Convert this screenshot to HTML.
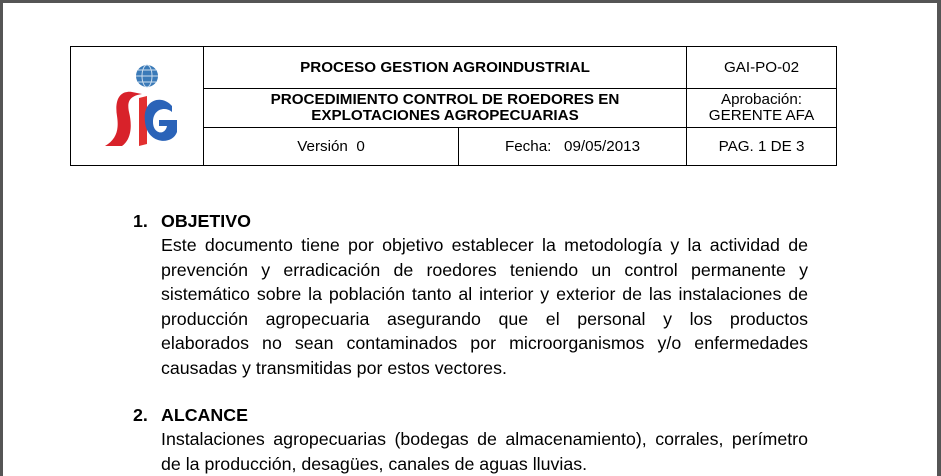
<!DOCTYPE html>
<html><head><style>
body{margin:0;width:941px;height:476px;overflow:hidden;background:#fff;font-family:"Liberation Sans",Arial,sans-serif;position:relative}
.frame{position:absolute;left:0;top:0;width:941px;height:476px;box-sizing:border-box;border-left:3px solid #555;border-top:3px solid #555;border-right:4px solid #555}
table{position:absolute;left:70px;top:46px;border-collapse:collapse;font-size:15.2px}
td{border:1.5px solid #000;text-align:center;padding:0;line-height:16px}
.t{position:absolute;font-size:17.8px;color:#000}
.h{font-weight:bold}
.p{position:absolute;left:161px;width:647px;font-size:17.8px;line-height:24.5px}
.p div{text-align:justify;text-align-last:justify;white-space:nowrap;overflow:visible}
.p div.l{text-align-last:left}
</style></head><body>
<div class="frame"></div>
<table>
<tr style="height:42px"><td rowspan="3" style="width:132px">
<svg width="100" height="100" viewBox="0 0 100 100">
<circle cx="60" cy="22" r="11" fill="#3a7ab8"/>
<g stroke="#cde" stroke-width="1" fill="none"><ellipse cx="60" cy="22" rx="5" ry="11"/><line x1="49" y1="22" x2="71" y2="22"/><line x1="51" y1="16" x2="69" y2="16"/><line x1="51" y1="28" x2="69" y2="28"/></g>
<path d="M45 38 C30 36 28 50 30 62 C32 75 30 85 18 92 L35 92 C45 85 45 70 42 58 C40 48 42 42 55 40 Z" fill="#d8222a"/>
<path d="M52 44 L60 42 L60 90 L52 92 Z" fill="#e23030"/>
<path d="M85 52 C75 40 55 45 58 68 C60 90 85 92 90 78 L90 66 L72 66 L72 72 L80 72 C78 82 66 80 66 68 C66 55 78 52 85 58 Z" fill="#2a63b8"/>
</svg></td>
<td colspan="2" style="width:482px;font-weight:bold">PROCESO GESTION AGROINDUSTRIAL</td><td style="width:149px">GAI-PO-02</td></tr>
<tr style="height:39px"><td colspan="2" style="font-weight:bold">PROCEDIMIENTO CONTROL DE ROEDORES EN<br>EXPLOTACIONES AGROPECUARIAS</td><td>Aprobación:<br>GERENTE AFA</td></tr>
<tr style="height:38px"><td style="width:254px">Versión &nbsp;0</td><td style="width:227px">Fecha: &nbsp; 09/05/2013</td><td>PAG. 1 DE 3</td></tr>
</table>
<div class="t h" style="left:133px;top:211px">1.</div>
<div class="t h" style="left:161px;top:211px">OBJETIVO</div>
<div class="p" style="top:233px">
<div>Este documento tiene por objetivo establecer la metodología y la actividad de</div>
<div>prevención y erradicación de roedores teniendo un control permanente y</div>
<div>sistemático sobre la población tanto al interior y exterior de las instalaciones de</div>
<div>producción agropecuaria asegurando que el personal y los productos</div>
<div>elaborados no sean contaminados por microorganismos y/o enfermedades</div>
<div class="l">causadas y transmitidas por estos vectores.</div>
</div>
<div class="t h" style="left:133px;top:405px">2.</div>
<div class="t h" style="left:161px;top:405px">ALCANCE</div>
<div class="p" style="top:427px">
<div>Instalaciones agropecuarias (bodegas de almacenamiento), corrales, perímetro</div>
<div class="l">de la producción, desagües, canales de aguas lluvias.</div>
</div>
</body></html>
